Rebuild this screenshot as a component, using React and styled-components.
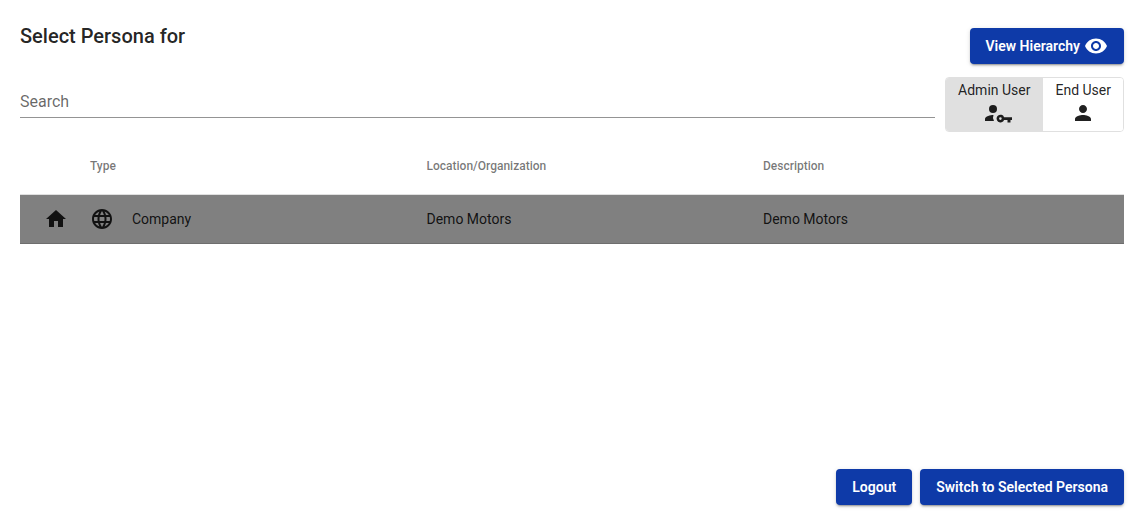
import React from 'react';
import styled, { createGlobalStyle } from 'styled-components';
import { MdVisibility, MdPerson, MdHome, MdLanguage } from 'react-icons/md';

const GlobalStyle = createGlobalStyle`
  * { box-sizing: border-box; }
  body {
    margin: 0;
    background: #fff;
    color: rgba(0, 0, 0, 0.87);
    font-family: Roboto, "Liberation Sans", sans-serif;
    font-size: 14px;
  }
`;

const Page = styled.main`
  display: flex;
  flex-direction: column;
  min-height: 100vh;
  padding: 24px 14px 7px 20px;
`;

const Header = styled.header`
  display: flex;
  align-items: flex-start;
  justify-content: space-between;
`;

const Title = styled.h1`
  margin: 0;
  font-size: 20px;
  font-weight: 500;
  line-height: 24px;
`;

const Button = styled.button`
  display: inline-flex;
  align-items: center;
  gap: 4px;
  height: 36px;
  padding: 0 16px;
  border: 0;
  border-radius: 4px;
  background: #0e3aa8;
  color: #fff;
  font: 600 14px/36px Roboto, sans-serif;
  box-shadow: 0 3px 1px -2px rgba(0, 0, 0, 0.2), 0 2px 2px rgba(0, 0, 0, 0.14), 0 1px 5px rgba(0, 0, 0, 0.12);
`;

const HierarchyButton = styled(Button)`
  margin-top: 4px;
`;

const Toolbar = styled.div`
  display: flex;
  align-items: flex-start;
  gap: 10px;
  margin-top: 13px;
`;

const SearchInput = styled.input`
  flex: 1;
  min-width: 0;
  height: 41px;
  padding: 8px 0 0;
  border: 0;
  border-bottom: 1px solid #949494;
  border-radius: 0;
  background: transparent;
  outline: 0;
  font: 400 16px/24px Roboto, sans-serif;
  color: inherit;
  &::placeholder { color: rgba(0, 0, 0, 0.6); opacity: 1; }
`;

const ToggleGroup = styled.div`
  display: flex;
  overflow: hidden;
  border: 1px solid #e0e0e0;
  border-radius: 4px;
`;

const Toggle = styled.button`
  display: flex;
  flex-direction: column;
  align-items: center;
  height: 53px;
  padding: 0 12px;
  border: 0;
  background: ${({ $active }) => ($active ? '#e0e0e0' : '#fff')};
  color: rgba(0, 0, 0, 0.87);
  font: 400 14px/24px Roboto, sans-serif;

  & + & { border-left: 1px solid #e0e0e0; }
  svg { margin-top: -1px; }
`;

const Table = styled.table`
  width: 100%;
  margin-top: 6px;
  border-collapse: collapse;
  table-layout: fixed;
`;

const HeadCell = styled.th`
  height: 56px;
  padding: 0;
  border-bottom: 1px solid #e0e0e0;
  color: rgba(0, 0, 0, 0.54);
  font-size: 12px;
  font-weight: 500;
  text-align: left;
  width: ${({ $width }) => $width || 'auto'};
`;

const Row = styled.tr`
  background: #808080;
`;

const Cell = styled.td`
  height: 49px;
  padding: 0;
  border-bottom: 1px solid #6e6e6e;
  color: rgba(0, 0, 0, 0.87);
  line-height: 20px;
  vertical-align: middle;
`;

const HomeCell = styled(Cell)`
  padding-left: 24px;
  svg { display: block; }
`;

const TypeLabel = styled.div`
  display: flex;
  align-items: center;
  gap: 18px;
`;

const Footer = styled.footer`
  display: flex;
  justify-content: flex-end;
  gap: 8px;
  margin-top: auto;
`;

const KeyPersonIcon = () => (
  <svg width="38" height="24" viewBox="0 0 38 24" fill="currentColor" aria-hidden="true">
    <circle cx="18" cy="8" r="4" />
    <path d="M18.500 14c-3 0-8.500 1.200-8.500 4v2h9a6.500 6.500 0 0 1-.5-6z" />
    <path fillRule="evenodd" d="M29.100 16.200a3.900 3.900 0 1 0 0 2.800H32.500v2.400h3v-2.400h1.500v-2.800zM25.400 16.300a1.300 1.300 0 1 1 0 2.600 1.300 1.300 0 0 1 0-2.600z" />
  </svg>
);

export default function App() {
  return (
    <>
      <GlobalStyle />
      <Page>
        <Header>
          <Title>Select Persona for</Title>
          <HierarchyButton type="button">View Hierarchy <MdVisibility size={24} /></HierarchyButton>
        </Header>
        <Toolbar>
          <SearchInput type="text" placeholder="Search" aria-label="Search" />
          <ToggleGroup role="group" aria-label="User type">
            <Toggle type="button" $active aria-pressed="true">Admin User<KeyPersonIcon /></Toggle>
            <Toggle type="button" aria-pressed="false">End User<MdPerson size={24} /></Toggle>
          </ToggleGroup>
        </Toolbar>
        <Table>
          <thead>
            <tr>
              <HeadCell $width="70px" aria-label="Home" />
              <HeadCell scope="col">Type</HeadCell>
              <HeadCell scope="col">Location/Organization</HeadCell>
              <HeadCell scope="col" $width="361px">Description</HeadCell>
            </tr>
          </thead>
          <tbody>
            <Row>
              <HomeCell><MdHome size={24} /></HomeCell>
              <Cell><TypeLabel><MdLanguage size={24} />Company</TypeLabel></Cell>
              <Cell>Demo Motors</Cell>
              <Cell>Demo Motors</Cell>
            </Row>
          </tbody>
        </Table>
        <Footer>
          <Button type="button">Logout</Button>
          <Button type="button">Switch to Selected Persona</Button>
        </Footer>
      </Page>
    </>
  );
}
